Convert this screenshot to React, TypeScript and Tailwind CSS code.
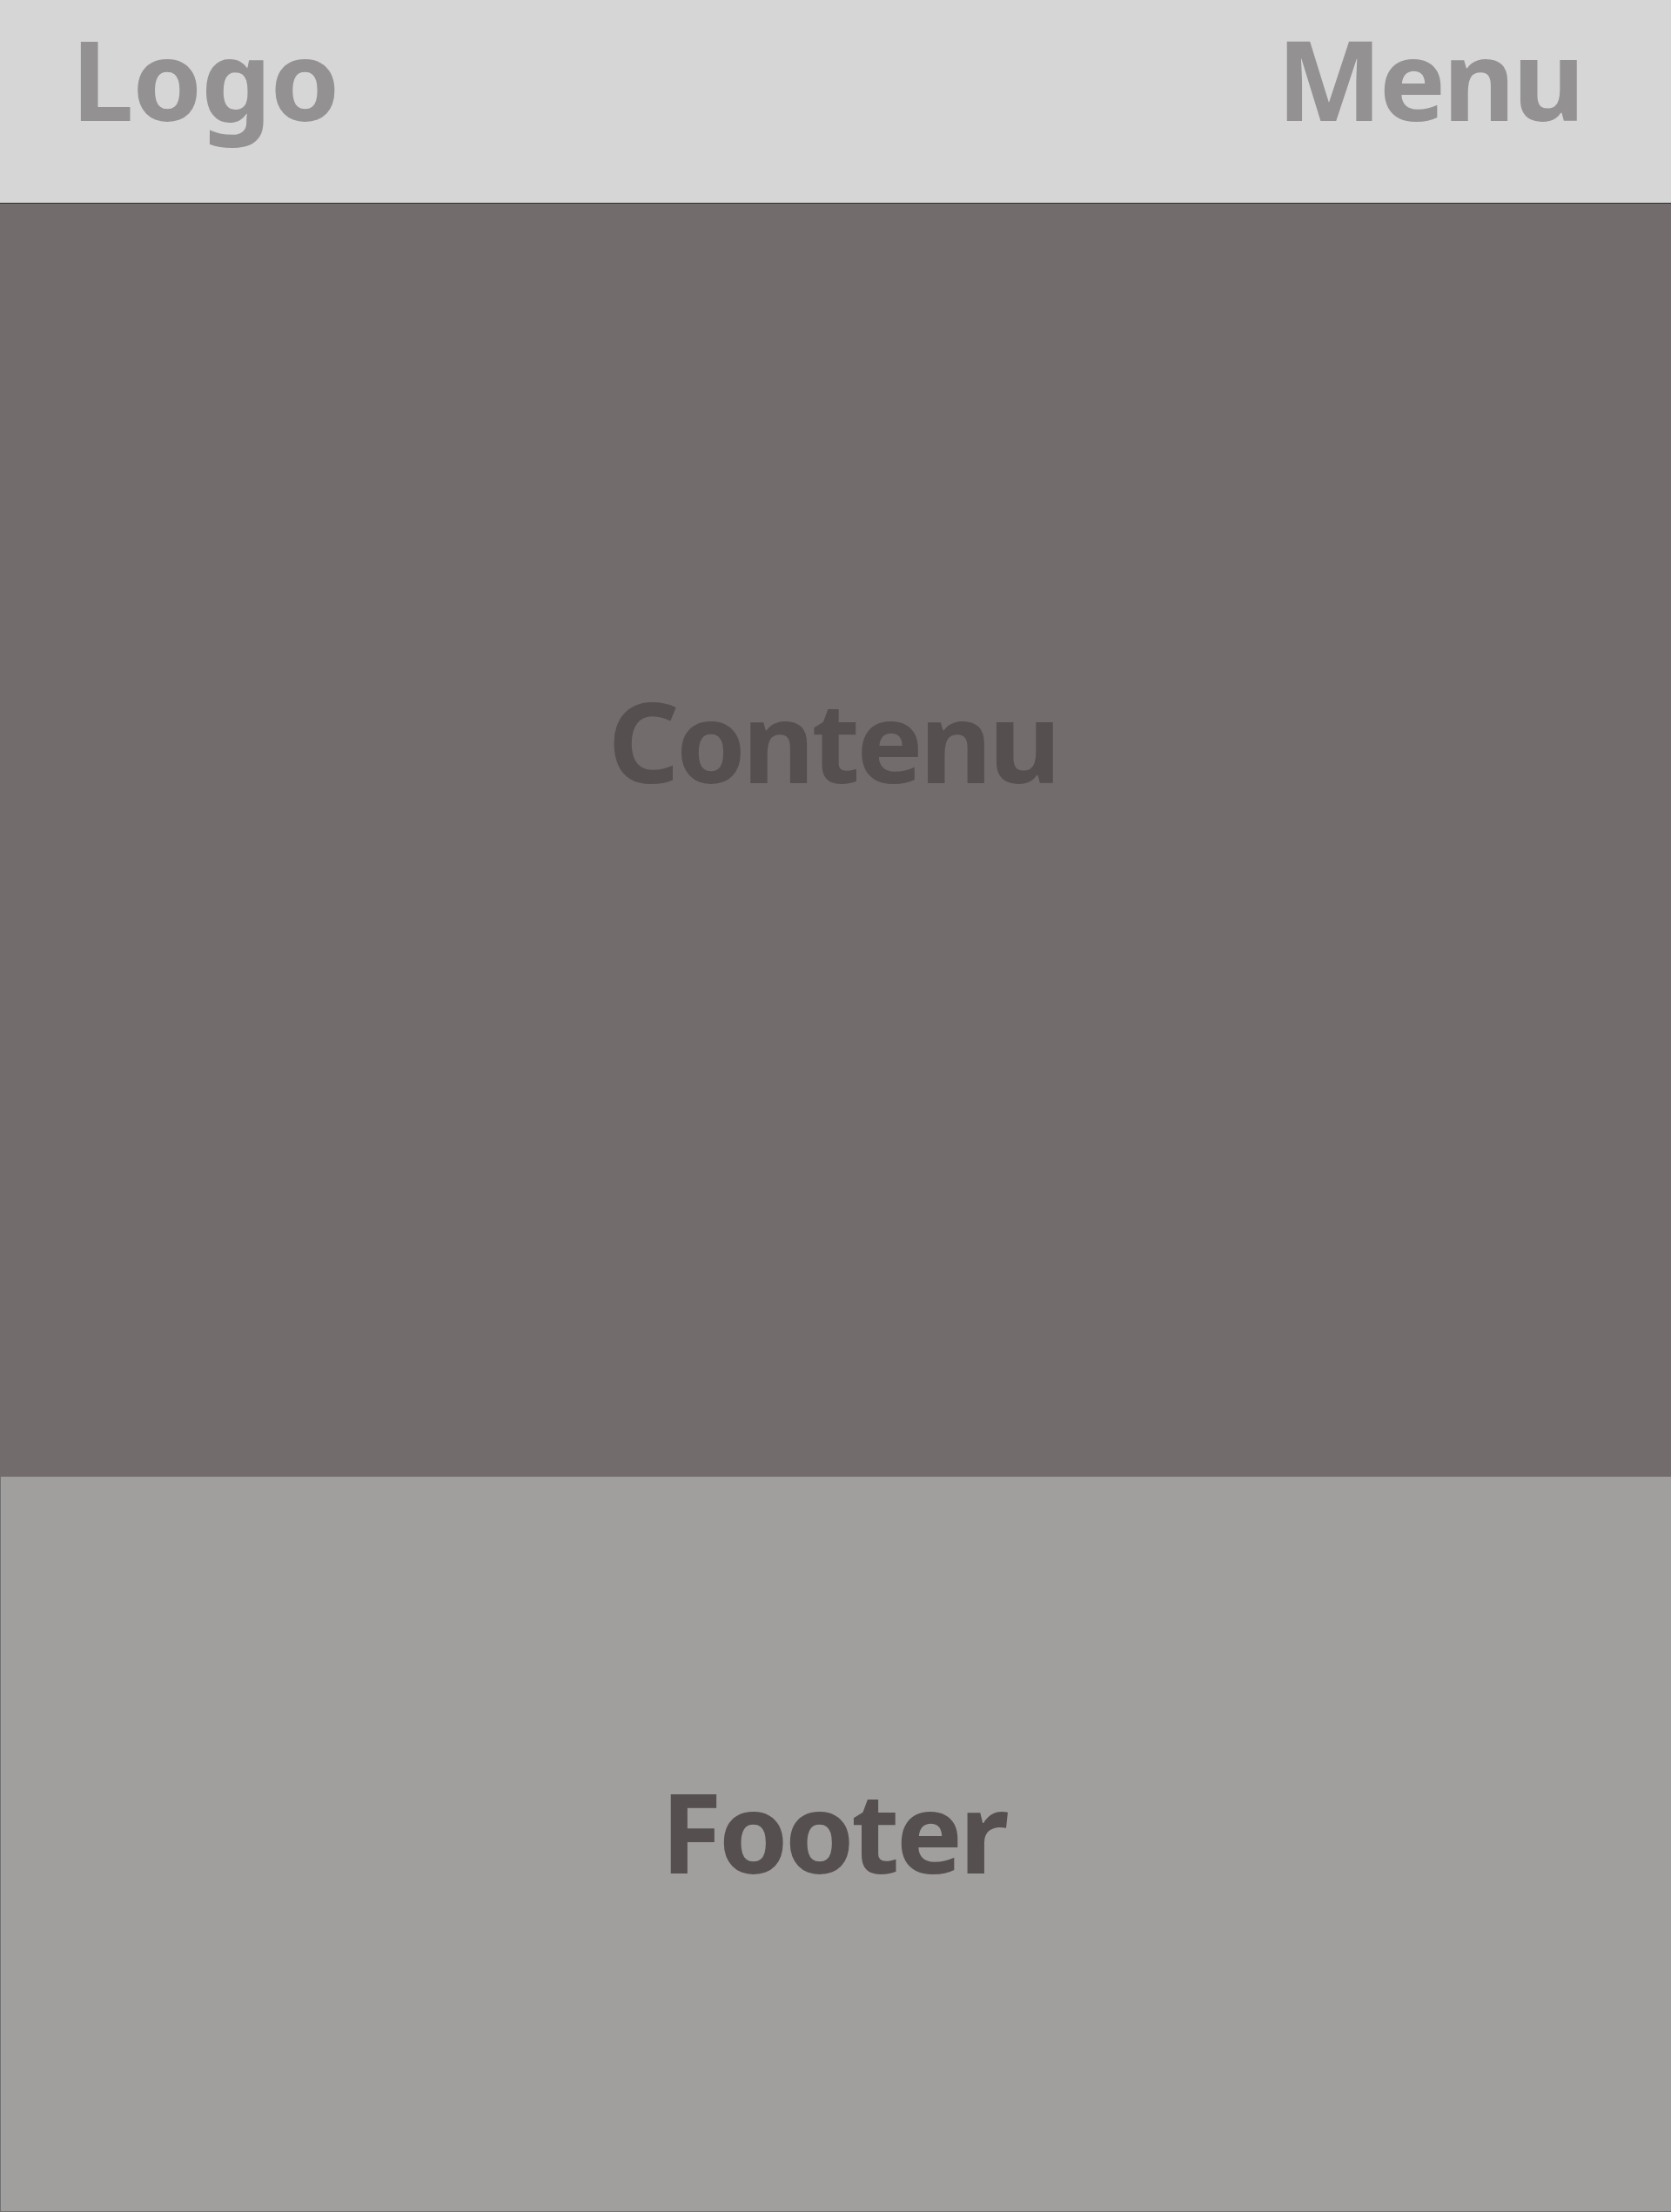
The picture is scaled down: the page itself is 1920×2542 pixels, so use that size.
export default function App() {
	return (
		<div className="w-[1920px] font-['Noto_Sans',sans-serif] font-bold">
			<header className="flex flex-row justify-between items-start h-[234px] pt-[26px] pl-[82px] pr-[102px] bg-[#d6d6d6] border-b border-[#2e2e2e]">
				<span className="text-[128px] leading-none tracking-[-0.01em] text-[#939192]">Logo</span>
				<span className="text-[128px] leading-none tracking-[-0.025em] text-[#939192]">Menu</span>
			</header>
			<main className="flex flex-row justify-center h-[1463px] pt-[553px] pr-[6px] bg-[#726c6c]">
				<h1 className="text-[128px] leading-none tracking-[-0.03em] text-[#554f4f]">Contenu</h1>
			</main>
			<footer className="flex flex-row justify-center h-[845px] pt-[343px] pr-[6px] bg-[#a09f9d] border-l border-b border-[#727272]">
				<h2 className="text-[128px] leading-none tracking-[-0.03em] text-[#554f4f]">Footer</h2>
			</footer>
		</div>
	)
}
